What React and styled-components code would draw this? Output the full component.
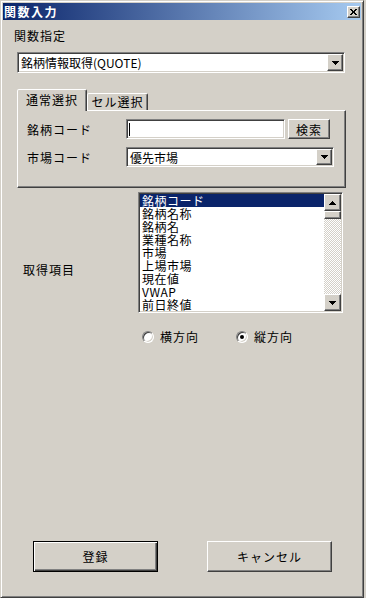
import React from "react";
import styled, { createGlobalStyle, css } from "styled-components";

const GlobalStyle = createGlobalStyle`
  html, body { margin: 0; padding: 0; background: #d4d0c8; }
  body {
    font-family: "Noto Sans CJK JP", "Noto Sans", sans-serif;
    font-size: 12px;
    color: #000;
  }
  * { box-sizing: border-box; }
`;

const raised = css`
  border: 1px solid;
  border-color: #fff #404040 #404040 #fff;
  box-shadow: inset -1px -1px #808080, inset 1px 1px #d4d0c8;
  background: #d4d0c8;
`;

const sunken = css`
  border: 1px solid;
  border-color: #808080 #fff #fff #808080;
  box-shadow: inset 1px 1px #404040, inset -1px -1px #d4d0c8;
  background: #fff;
`;

const Window = styled.div`
  width: 364px;
  height: 598px;
  display: flex;
  flex-direction: column;
  padding: 2px;
  border: 1px solid;
  border-color: #d4d0c8 #404040 #404040 #d4d0c8;
  box-shadow: inset 1px 1px #fff, inset -1px -1px #808080;
  background: #d4d0c8;
`;

const TitleBar = styled.div`
  height: 17px;
  flex: none;
  display: flex;
  align-items: center;
  justify-content: space-between;
  padding: 0 1px 0 1px;
  background: linear-gradient(to right, #0a246a, #a6caf0);
`;

const Title = styled.span`
  color: #fff;
  font-weight: bold;
  font-size: 12px;
  letter-spacing: 1.5px;
  line-height: 17px;
`;

const CloseButton = styled.div`
  ${raised};
  width: 13px;
  height: 12px;
  display: flex;
  align-items: center;
  justify-content: center;
`;

const Body = styled.div`
  flex: 1;
  display: flex;
  flex-direction: column;
`;

const Label = styled.div`
  line-height: 15px;
  letter-spacing: 1px;
  white-space: nowrap;
`;

const FuncLabel = styled(Label)`
  margin: 8px 0 0 11px;
`;

const ComboBox = styled.div`
  ${sunken};
  display: flex;
  height: ${(p) => p.$h || 21}px;
  width: ${(p) => (p.$w ? `${p.$w}px` : "auto")};
`;

const MainCombo = styled(ComboBox)`
  margin: 9px 16px 0 14px;
`;

const ComboText = styled.div`
  flex: 1;
  padding-left: 3px;
  display: flex;
  align-items: center;
  white-space: nowrap;
  overflow: hidden;
`;

const DropButton = styled.div`
  ${raised};
  width: 16px;
  margin: 1px;
  display: flex;
  align-items: center;
  justify-content: center;
  flex: none;
`;

const Arrow = ({ up }) => (
  <svg width="7" height="4" viewBox="0 0 7 4" shapeRendering="crispEdges" style={{ display: "block" }}>
    {up ? (
      <>
        <rect x="3" y="0" width="1" height="1" fill="#000" />
        <rect x="2" y="1" width="3" height="1" fill="#000" />
        <rect x="1" y="2" width="5" height="1" fill="#000" />
        <rect x="0" y="3" width="7" height="1" fill="#000" />
      </>
    ) : (
      <>
        <rect x="0" y="0" width="7" height="1" fill="#000" />
        <rect x="1" y="1" width="5" height="1" fill="#000" />
        <rect x="2" y="2" width="3" height="1" fill="#000" />
        <rect x="3" y="3" width="1" height="1" fill="#000" />
      </>
    )}
  </svg>
);

const TabBar = styled.div`
  display: flex;
  align-items: flex-end;
  height: 21px;
  margin: 16px 0 0 14px;
  position: relative;
  z-index: 1;
`;

const Tab = styled.div`
  border: 1px solid;
  border-bottom: none;
  border-color: #fff #404040 transparent #fff;
  box-shadow: inset -1px 0 #808080;
  border-radius: 2px 2px 0 0;
  background: #d4d0c8;
  width: ${(p) => p.$w}px;
  height: ${(p) => (p.$active ? 22 : 17)}px;
  margin-bottom: ${(p) => (p.$active ? -1 : 0)}px;
  padding-top: ${(p) => (p.$active ? 2 : 0)}px;
  text-align: center;
  line-height: 15px;
  letter-spacing: 1px;
  white-space: nowrap;
`;

const Panel = styled.div`
  margin: 0 15px 0 14px;
  height: 78px;
  flex: none;
  border: 1px solid;
  border-color: #fff #404040 #404040 #fff;
  box-shadow: inset -1px -1px #808080;
  padding: 8px 0 0 9px;
  display: grid;
  grid-template-columns: 99px auto;
  grid-auto-rows: 20px;
  row-gap: 8px;
  align-items: center;
  justify-items: start;
`;

const FieldRow = styled.div`
  display: flex;
  gap: 3px;
  height: 20px;
`;

const TextInput = styled.div`
  ${sunken};
  width: 159px;
  height: 20px;
  padding: 3px 0 0 2px;
`;

const Caret = styled.div`
  width: 1px;
  height: 13px;
  background: #000;
`;

const SmallButton = styled.div`
  ${raised};
  width: 42px;
  height: 20px;
  display: flex;
  align-items: center;
  justify-content: center;
  letter-spacing: 1px;
`;

const ListRow = styled.div`
  display: flex;
  margin: 4px 0 0 20px;
`;

const ListLabel = styled(Label)`
  width: 115px;
  padding-top: 70px;
`;

const ListBox = styled.div`
  ${sunken};
  width: 205px;
  height: 121px;
  padding: 1px;
  display: flex;
`;

const Items = styled.div`
  flex: 1;
  display: flex;
  flex-direction: column;
  overflow: hidden;
`;

const Item = styled.div`
  height: 13px;
  line-height: 13px;
  padding-left: 2px;
  white-space: nowrap;
  letter-spacing: 0.5px;
  background: ${(p) => (p.$selected ? "#0a246a" : "transparent")};
  color: ${(p) => (p.$selected ? "#fff" : "#000")};
`;

const ScrollBar = styled.div`
  width: 17px;
  display: flex;
  flex-direction: column;
  flex: none;
`;

const ScrollButton = styled.div`
  ${raised};
  height: 17px;
  flex: none;
  display: flex;
  align-items: center;
  justify-content: center;
`;

const Thumb = styled.div`
  ${raised};
  height: 8px;
  flex: none;
`;

const Track = styled.div`
  flex: 1;
  background: repeating-conic-gradient(#fff 0 25%, #d4d0c8 0 50%) 0 0 / 2px 2px;
`;

const RadioRow = styled.div`
  display: flex;
  align-items: center;
  gap: 37px;
  margin: 16px 0 0 139px;
  height: 15px;
`;

const RadioItem = styled.label`
  display: flex;
  align-items: center;
  gap: 6px;
  letter-spacing: 1px;
  line-height: 15px;
`;

const RadioCircle = styled.span`
  width: 12px;
  height: 12px;
  border-radius: 50%;
  border: 1px solid;
  border-color: #808080 #fff #fff #808080;
  box-shadow: inset 1px 1px #404040, inset -1px -1px #d4d0c8;
  background: #fff;
  display: flex;
  align-items: center;
  justify-content: center;
  &::after {
    content: "";
    width: 4px;
    height: 4px;
    border-radius: 50%;
    background: ${(p) => (p.$checked ? "#000" : "transparent")};
  }
`;

const Spacer = styled.div`
  flex: 1;
`;

const ButtonRow = styled.div`
  display: flex;
  gap: 49px;
  margin: 0 0 23px 30px;
`;

const DialogButton = styled.div`
  width: 125px;
  height: 31px;
  display: flex;
  align-items: center;
  justify-content: center;
  background: #d4d0c8;
  letter-spacing: 1px;
  ${(p) =>
    p.$default
      ? css`
          border: 1px solid #000;
          box-shadow: inset 1px 1px #fff, inset -1px -1px #404040, inset -2px -2px #808080;
        `
      : raised}
`;

const items = ["銘柄コード", "銘柄名称", "銘柄名", "業種名称", "市場", "上場市場", "現在値", "VWAP", "前日終値"];

export default function App() {
  return (
    <>
      <GlobalStyle />
      <Window>
        <TitleBar>
          <Title>関数入力</Title>
          <CloseButton>
            <svg width="7" height="6" viewBox="0 0 7 6" shapeRendering="crispEdges" style={{ display: "block" }}>
              <path d="M0 0h2v1h-2zM5 0h2v1h-2zM1 1h2v1h-2zM4 1h2v1h-2zM2 2h3v2h-3zM1 4h2v1h-2zM4 4h2v1h-2zM0 5h2v1h-2zM5 5h2v1h-2z" fill="#000" />
            </svg>
          </CloseButton>
        </TitleBar>
        <Body>
          <FuncLabel>関数指定</FuncLabel>
          <MainCombo>
            <ComboText>銘柄情報取得(QUOTE)</ComboText>
            <DropButton>
              <Arrow />
            </DropButton>
          </MainCombo>

          <TabBar>
            <Tab $active $w={70}>通常選択</Tab>
            <Tab $w={61}>セル選択</Tab>
          </TabBar>
          <Panel>
            <Label>銘柄コード</Label>
            <FieldRow>
              <TextInput>
                <Caret />
              </TextInput>
              <SmallButton>検索</SmallButton>
            </FieldRow>
            <Label>市場コード</Label>
            <ComboBox $w={208} $h={20}>
              <ComboText>優先市場</ComboText>
              <DropButton>
                <Arrow />
              </DropButton>
            </ComboBox>
          </Panel>

          <ListRow>
            <ListLabel>取得項目</ListLabel>
            <ListBox>
              <Items>
                {items.map((it, i) => (
                  <Item key={it} $selected={i === 0}>
                    {it}
                  </Item>
                ))}
              </Items>
              <ScrollBar>
                <ScrollButton>
                  <Arrow up />
                </ScrollButton>
                <Thumb />
                <Track />
                <ScrollButton>
                  <Arrow />
                </ScrollButton>
              </ScrollBar>
            </ListBox>
          </ListRow>

          <RadioRow>
            <RadioItem>
              <RadioCircle />
              横方向
            </RadioItem>
            <RadioItem>
              <RadioCircle $checked />
              縦方向
            </RadioItem>
          </RadioRow>

          <Spacer />
          <ButtonRow>
            <DialogButton $default>登録</DialogButton>
            <DialogButton>キャンセル</DialogButton>
          </ButtonRow>
        </Body>
      </Window>
    </>
  );
}
